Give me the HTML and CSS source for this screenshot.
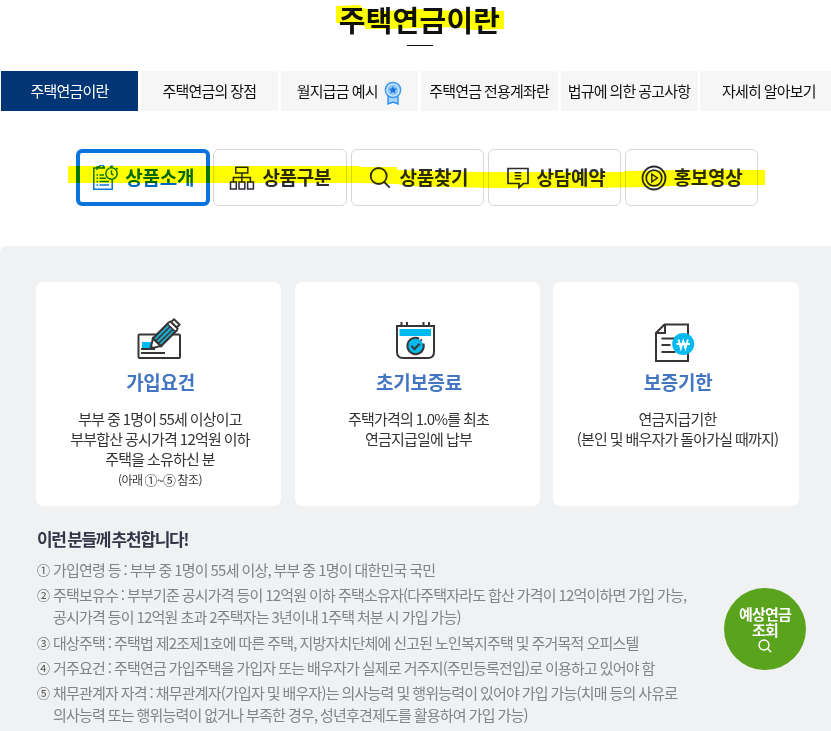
FILE: index.html
```
<!DOCTYPE html>
<html lang="ko">
<head>
    <meta charset="UTF-8">
    <title>주택연금이란</title>
    <link rel="stylesheet" href="styles.css">
</head>
<body>
    <h1 class="page-title">주택연금이란</h1>

    <nav class="tabs">
        <a class="tab active">주택연금이란</a>
        <a class="tab">주택연금의 장점</a>
        <a class="tab">월지급금 예시
            <svg class="badge" width="18" height="25" viewBox="0 0 18 25">
                <path d="M4 14v9l5-2 5 2v-9z" fill="#a9d5fb" stroke="#2d8cf0" stroke-width="1.4"/>
                <circle cx="9" cy="9" r="7.6" fill="#d3eafd" stroke="#3d97f3" stroke-width="1.5"/>
                <circle cx="9" cy="9" r="5.4" fill="#8fc6f9"/>
                <path d="M9 4.8l1.1 2.8 3 .2-2.3 1.9.8 2.9L9 11l-2.6 1.6.8-2.9-2.3-1.9 3-.2z" fill="#1673dd"/>
            </svg>
        </a>
        <a class="tab">주택연금 전용계좌란</a>
        <a class="tab">법규에 의한 공고사항</a>
        <a class="tab">자세히 알아보기</a>
    </nav>

    <div class="menu">
        <a class="menu-item active">
            <svg width="27" height="26" viewBox="0 0 27 26" fill="none" stroke="#0b74dc" stroke-width="1.5">
                <path d="M13 3H1.8v21.2h18.4V15M5 5V2h2.5a2 2 0 0 1 4 0H13"/>
                <circle cx="19.5" cy="8.5" r="5.7"/>
                <path d="M19.5 5.3v3.6l2 1.3M18 1.2h3M24.2 3l1.4 1.4"/>
                <path d="M4.5 10h1.6M7.5 10H12M4.5 13.2h1.6M7.5 13.2H14M4.5 16.5h1.6M7.5 16.5H17M4.5 20h1.6M7.5 20H17"/>
            </svg>
            <span>상품소개</span>
        </a>
        <a class="menu-item">
            <svg width="26" height="26" viewBox="0 0 26 26" fill="none" stroke="#2b2b33" stroke-width="1.5">
                <path d="M6.8 2.3h12v5.6h-12zM1.5 17h5.8v7H1.5zM10 17h5.8v7H10zM18.6 17h5.8v7h-5.8zM12.9 8v9M4.4 17v-4.4h17V17"/>
            </svg>
            <span>상품구분</span>
        </a>
        <a class="menu-item">
            <svg width="26" height="26" viewBox="0 0 26 26" fill="none" stroke="#2b2b33" stroke-width="1.8">
                <circle cx="11.7" cy="11" r="8"/>
                <path d="M17.2 17l5.5 5.6"/>
            </svg>
            <span>상품찾기</span>
        </a>
        <a class="menu-item">
            <svg width="26" height="26" viewBox="0 0 26 26" fill="none" stroke="#2b2b33" stroke-width="1.7">
                <path d="M4 3.5h20v15h-4.600l-4.400 4v-4H4z"/>
                <path d="M10.700 7.700h6.500M10.700 10.700h6.500M10.700 13.700h6.500" stroke-width="1.4"/>
            </svg>
            <span>상담예약</span>
        </a>
        <a class="menu-item">
            <svg width="26" height="26" viewBox="0 0 26 26" fill="none" stroke="#2b2b33" stroke-width="1.8">
                <circle cx="13" cy="13" r="11.5"/>
                <circle cx="13" cy="13" r="7.8"/>
                <path d="M10.8 9.2v7.6l5.6-3.8z" stroke-width="1.5"/>
            </svg>
            <span>홍보영상</span>
        </a>
    </div>

    <section class="content">
        <div class="cards">
            <div class="card">
                <svg class="card-icon" width="46" height="46" viewBox="0 0 46 46" fill="none" stroke="#393536" stroke-width="2">
                    <rect x="2.500" y="18.5" width="41.500" height="23.5" rx="1"/>
                    <path d="M6 26h10l-2 6.5H6z" fill="#00b9ee" stroke="none"/>
                    <path d="M5 33h14M5 37h24"/>
                    <path d="M14.500 32.500l2.500-10 8 7.500zM17 22.500L32.500 7l8 7.500L25 30z" fill="#fff"/>
                    <path d="M17 22.500L32.500 7l8 7.500L25 30z" fill="#21aacb"/>
                    <path d="M19.700 25L35 9.700M22.300 27.500L38 12.200" stroke-width="1.500"/>
                    <path d="M31.500 8l2.700-2.700 7.700 7.500-2.700 2.700z" fill="#fff" stroke-width="1.500"/>
                    <path d="M35 6l3-2.700 5.500 5.200-2.700 3z" fill="#fff"/>
                    <path d="M14 33l1-4 3 3z" fill="#393536" stroke="none"/>
                </svg>
                <h2>가입요건</h2>
                <p>부부 중 1명이 55세 이상이고<br>부부합산 공시가격 12억원 이하<br>주택을 소유하신 분</p>
                <p class="note">(아래 <span class="circled">①</span>~<span class="circled">⑤</span> 참조)</p>
            </div>
            <div class="card">
                <svg class="card-icon" width="46" height="46" viewBox="0 0 46 46" fill="none" stroke="#393536" stroke-width="2">
                    <path d="M3 10h37v26q0 6-6 6H9q-6 0-6-6z"/>
                    <path d="M5.500 13H37v7H5.500z" fill="#00b9ee" stroke="none"/>
                    <path d="M7.500 6v4.500M13 6v4.500M29.500 6v4.500M35 6v4.500"/>
                    <circle cx="21.500" cy="30" r="7.700" fill="#00b9ee" stroke="none"/>
                    <path d="M29.400 27.500A8.200 8.200 0 1 1 25 22.500M26.600 23.400l1.200 1"/>
                    <path d="M17.500 30l3 3 5.200-5.300"/>
                </svg>
                <h2>초기보증료</h2>
                <p>주택가격의 1.0%를 최초<br>연금지급일에 납부</p>
            </div>
            <div class="card">
                <svg class="card-icon" width="46" height="46" viewBox="0 0 46 46" fill="none" stroke="#393536" stroke-width="2">
                    <path d="M11.500 8.500H35V45H3V17zM12 9v8H3.500"/>
                    <path d="M8.500 22.500h14M8.500 29h9M8.500 36h14"/>
                    <circle cx="30.200" cy="28" r="11" fill="#00b9ee" stroke="none"/>
                    <path d="M25.500 23.500l2.400 9 2.300-7.500 2.300 7.500 2.400-9M23.500 28h13.500" stroke="#fff" stroke-width="1.800"/>
                </svg>
                <h2>보증기한</h2>
                <p>연금지급기한<br>(본인 및 배우자가 돌아가실 때까지)</p>
            </div>
        </div>

        <h3>이런 분들께 추천합니다!</h3>
        <ul class="conditions">
            <li><span class="num">①</span><span>가입연령 등 : 부부 중 1명이 55세 이상, 부부 중 1명이 대한민국 국민</span></li>
            <li><span class="num">②</span><span>주택보유수 : 부부기준 공시가격 등이 12억원 이하 주택소유자(다주택자라도 합산 가격이 12억이하면 가입 가능,<br>공시가격 등이 12억원 초과 2주택자는 3년이내 1주택 처분 시 가입 가능)</span></li>
            <li><span class="num">③</span><span>대상주택 : 주택법 제2조제1호에 따른 주택, 지방자치단체에 신고된 노인복지주택 및 주거목적 오피스텔</span></li>
            <li><span class="num">④</span><span>거주요건 : 주택연금 가입주택을 가입자 또는 배우자가 실제로 거주지(주민등록전입)로 이용하고 있어야 함</span></li>
            <li><span class="num">⑤</span><span>채무관계자 자격 : 채무관계자(가입자 및 배우자)는 의사능력 및 행위능력이 있어야 가입 가능(치매 등의 사유로<br>의사능력 또는 행위능력이 없거나 부족한 경우, 성년후견제도를 활용하여 가입 가능)</span></li>
        </ul>
    </section>

    <a class="quick">
        예상연금<br>조회
        <svg width="14" height="14" viewBox="0 0 14 14" fill="none" stroke="#fff" stroke-width="1.4">
            <circle cx="6" cy="6" r="5"/>
            <path d="M9.600 9.600l3.600 3.600"/>
        </svg>
    </a>

    <!-- 형광펜 표시 -->
    <svg class="marker" width="831" height="215" viewBox="0 0 831 215" fill="#ff0">
        <path d="M336 6l24-1 2 3 17 3 36-1 2-1 40 2h47v18l-30 1-19-3-40 1-25 1h-25v-3l-17-2-12-1z"/>
        <path d="M68 166h292v1h37v3l37 1 46 1h144l1-1 62-1h78v15h-70l-45 2-58 1H494l-51-1-36-1-10-2-37-1H68z"/>
    </svg>
</body>
</html>
```
FILE: styles.css
```
* {
    box-sizing: border-box;
}

body {
    position: relative;
    margin: 0;
    height: 731px;
    overflow: hidden;
    background-color: #fff;
    font-family: "Noto Sans CJK KR", sans-serif;
    font-size: 15px;
    letter-spacing: -0.8px;
    word-spacing: -0.62px;
    color: #333;
}

h1, h2, h3, p, ul {
    margin: 0;
    padding: 0;
}

.page-title {
    display: flex;
    flex-direction: column;
    align-items: center;
    width: 839px;
    height: 71px;
    font-size: 29px;
    line-height: 38px;
    letter-spacing: 0.2px;
    color: #111;
}

.page-title::after {
    content: "";
    width: 26px;
    height: 1px;
    margin-top: 7px;
    background-color: #111;
}

.tabs {
    display: grid;
    grid-template-columns: repeat(6, 137px);
    gap: 2.88px;
    margin-left: 1px;
}

.tab {
    display: flex;
    align-items: center;
    justify-content: center;
    height: 40px;
    padding-bottom: 2px;
    background-color: #f6f6f6;
    color: #111;
    white-space: nowrap;
}

.tab.active {
    background-color: #003675;
    color: #fff;
}

.badge {
    margin: 6px 0 0 6px;
}

.menu {
    display: flex;
    gap: 3.4px;
    margin: 38px 0 40px 76.4px;
}

.menu-item {
    display: flex;
    align-items: center;
    justify-content: center;
    gap: 7px;
    width: 133.7px;
    height: 57px;
    border: 1px solid #d8d8d8;
    border-radius: 6px;
    font-size: 19px;
    font-weight: bold;
    letter-spacing: -0.3px;
    color: #2b2b33;
}

.menu-item svg {
    margin-top: 1px;
}

.menu-item span {
    padding-bottom: 2px;
}

.menu-item.active {
    border: 4px solid #0b74dc;
    color: #0067b8;
}

.menu-item.active span {
    margin-left: -1px;
}

.content {
    height: 485px;
    padding: 36px 32px 0 36px;
    border-top-left-radius: 6px;
    background-color: #eff1f3;
}

.cards {
    display: grid;
    grid-template-columns: 245px 245px 246px;
    gap: 13.5px;
}

.card {
    height: 224px;
    padding-top: 34px;
    border-radius: 7px;
    background-color: #fff;
    text-align: center;
    line-height: 20px;
}

.card-icon {
    display: block;
    margin: 0 auto;
}

.card h2 {
    margin: 6px 0 13px;
    padding-left: 4px;
    font-size: 19px;
    line-height: 28px;
    letter-spacing: -0.3px;
    color: #4375c2;
}

.card p {
    padding-left: 3px;
}

.card .note {
    font-size: 12px;
    line-height: 22px;
    letter-spacing: -0.6px;
}

.circled {
    font-size: 13px;
}

.content h3 {
    margin: 19px 0 6px 1px;
    font-size: 17px;
    line-height: 28px;
    letter-spacing: -1.3px;
    word-spacing: -2px;
    color: #333646;
}

.conditions {
    list-style: none;
    padding-left: 1px;
    line-height: 22px;
    color: #808388;
    white-space: nowrap;
}

.conditions li {
    display: flex;
    margin-bottom: 3.3px;
}

.num {
    flex: 0 0 16px;
    font-size: 13px;
    color: #555;
}

.quick {
    position: absolute;
    top: 588px;
    left: 724px;
    display: flex;
    flex-direction: column;
    align-items: center;
    width: 82px;
    height: 82px;
    padding-top: 18px;
    border-radius: 50%;
    background-color: #5aa31d;
    color: #fff;
    font-weight: bold;
    line-height: 16px;
    text-align: center;
}

.quick svg {
    margin-top: 1px;
}

.marker {
    position: absolute;
    top: 0;
    left: 0;
    mix-blend-mode: multiply;
    pointer-events: none;
}
```
